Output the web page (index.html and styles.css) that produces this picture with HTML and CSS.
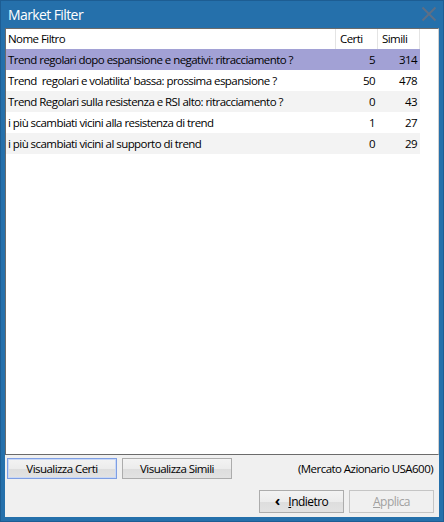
FILE: index.html
```html
<!DOCTYPE html>
<html lang="it">
<head>
<meta charset="UTF-8" />
<title>Market Filter</title>
<link rel="stylesheet" href="styles.css">
</head>
<body>

<div class="window">
  <div class="titlebar">
    <span class="title">Market Filter</span>
    <svg class="close" width="16" height="16" viewBox="0 0 16 16">
      <path d="M1.5 1.5 L14.5 14.5 M14.5 1.5 L1.5 14.5" stroke="#5d6f86" stroke-width="2" fill="none" />
    </svg>
  </div>

  <div class="client">
    <div class="listview">
      <div class="lv-row lv-head">
        <div class="c-name">Nome Filtro</div>
        <div class="c-num">Certi</div>
        <div class="c-num">Simili</div>
        <div class="c-fill"></div>
      </div>
      <div id="rows"></div>
    </div>

    <div class="toolbar">
      <button class="btn btn-default">Visualizza Certi</button>
      <button class="btn">Visualizza Simili</button>
      <span class="market">(Mercato Azionario USA600)</span>
    </div>

    <div class="footer">
      <button class="btn btn-nav"><span class="chev">&#8249;</span> <u>I</u>ndietro</button>
      <button class="btn btn-nav" disabled><u>A</u>pplica</button>
    </div>
  </div>
</div>

<script>
  // filtri disponibili
  const filters = [
    { name: "Trend regolari dopo espansione e negativi: ritracciamento ?", certi: 5, simili: 314 },
    { name: "Trend  regolari e volatilita' bassa: prossima espansione ?", certi: 50, simili: 478 },
    { name: "Trend Regolari sulla resistenza e RSI alto: ritracciamento ?", certi: 0, simili: 43 },
    { name: "i più scambiati vicini alla resistenza di trend", certi: 1, simili: 27 },
    { name: "i più scambiati vicini al supporto di trend", certi: 0, simili: 29 }
  ];

  const rows = document.getElementById("rows");
  filters.forEach((f, i) => {
    const div = document.createElement("div");
    div.className = "lv-row item" + (i === 0 ? " selected" : "") + (i % 2 === 0 ? " alt" : "");
    div.innerHTML = `<div class="c-name">${f.name}</div><div class="c-num">${f.certi}</div><div class="c-num">${f.simili}</div>`;
    rows.appendChild(div);
  });
</script>

</body>
</html>
```

FILE: styles.css
```css
body { margin: 0; background: #2570ab; font-family: "Open Sans", "Noto Sans", sans-serif; letter-spacing: -0.55px; }

.window {
  width: 444px; height: 522px; box-sizing: border-box;
  background: #2570ab; border: 1px solid #1d5d93;
  display: flex; flex-direction: column;
}

.titlebar {
  height: 27px; display: flex; align-items: center; justify-content: space-between;
  padding: 0 6px 0 7px;
}
.title { color: #fff; font-size: 14px; letter-spacing: -0.6px; }
.close { margin-top: -2px; }

.client {
  margin: 0 4px 4px; flex: 1; background: #f0f0f0;
  display: flex; flex-direction: column;
}

.listview {
  flex: 1; background: #fff; border: 1px solid #6b6b6b; border-right-color: #d0d0d0;
}
.lv-row { display: grid; grid-template-columns: 330px 42px 42px; font-size: 11.5px; color: #000; }
.lv-row div { padding: 0 3px 0 2px; white-space: pre; overflow: hidden; }
.lv-head { grid-template-columns: 330px 42px 42px 18px; height: 20px; line-height: 20px; }
.lv-head div { border-right: 1px solid #e4e4e4; }
.lv-head .c-num { text-align: left; padding-left: 4px; }
.lv-head .c-fill { border-right: none; }
.item { height: 21px; line-height: 21px; width: 414px; }
.item { background: #fff; }
.item.alt { background: #f3f3f3; }
.item.selected { background: #a2a1d5; }
.c-num { text-align: right; }

.toolbar {
  height: 30px; display: flex; align-items: flex-start; gap: 5px;
  padding: 3px 6px 0 2px; box-sizing: border-box;
}
.market { margin-left: auto; font-size: 11.5px; line-height: 21px; }

.btn {
  font-family: inherit; font-size: 11.5px; letter-spacing: inherit; color: #000;
  width: 110px; height: 21px; padding: 0;
  border: 1px solid #acacac;
  background: linear-gradient(#f3f3f3 0%, #ececec 50%, #dddddd 51%, #e2e2e2 100%);
}
.btn-default { border-color: #7e9ee3; box-shadow: inset 0 0 0 1px #c9d8f6; }

.footer {
  height: 32px; display: flex; justify-content: flex-end; gap: 5px;
  padding: 5px 5px 0 0; box-sizing: border-box;
}
.btn-nav { width: 85px; height: 23px; font-size: 12px; }
.btn-nav:disabled { color: #a0a0a0; background: #f0f0f0; border-color: #c5c5c5; }
.chev { font-weight: bold; font-size: 15px; line-height: 10px; margin-right: 6px; }
```
